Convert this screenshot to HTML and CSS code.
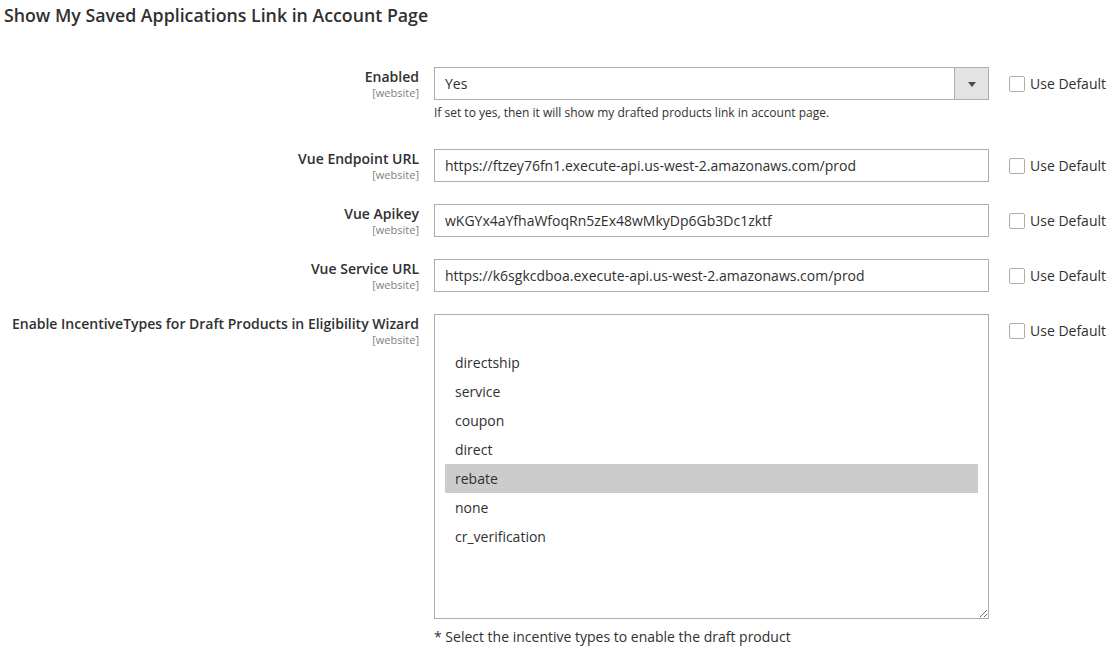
FILE: index.html
```html
<!DOCTYPE html>
<html lang="en">
<head>
<meta charset="utf-8">
<title>Config</title>
<link rel="stylesheet" href="styles.css">
</head>
<body>
<div class="page">
  <h2 class="section-title">Show My Saved Applications Link in Account Page</h2>

  <div class="fields">
    <div class="row">
      <div class="label"><span class="label-text">Enabled</span><span class="scope">[website]</span></div>
      <div class="control">
        <div class="select">
          <span class="select-value">Yes</span>
          <span class="select-btn"><span class="arrow"></span></span>
        </div>
        <p class="note small">If set to yes, then it will show my drafted products link in account page.</p>
      </div>
      <label class="use-default"><span class="checkbox"></span><span>Use Default</span></label>
    </div>

    <div class="row">
      <div class="label"><span class="label-text">Vue Endpoint URL</span><span class="scope">[website]</span></div>
      <div class="control">
        <div class="input">https://ftzey76fn1.execute-api.us-west-2.amazonaws.com/prod</div>
      </div>
      <label class="use-default"><span class="checkbox"></span><span>Use Default</span></label>
    </div>

    <div class="row">
      <div class="label"><span class="label-text">Vue Apikey</span><span class="scope">[website]</span></div>
      <div class="control">
        <div class="input">wKGYx4aYfhaWfoqRn5zEx48wMkyDp6Gb3Dc1zktf</div>
      </div>
      <label class="use-default"><span class="checkbox"></span><span>Use Default</span></label>
    </div>

    <div class="row">
      <div class="label"><span class="label-text">Vue Service URL</span><span class="scope">[website]</span></div>
      <div class="control">
        <div class="input">https://k6sgkcdboa.execute-api.us-west-2.amazonaws.com/prod</div>
      </div>
      <label class="use-default"><span class="checkbox"></span><span>Use Default</span></label>
    </div>

    <div class="row">
      <div class="label"><span class="label-text">Enable IncentiveTypes for Draft Products in Eligibility Wizard</span><span class="scope">[website]</span></div>
      <div class="control">
        <div class="multiselect">
          <div class="option"></div>
          <div class="option">directship</div>
          <div class="option">service</div>
          <div class="option">coupon</div>
          <div class="option">direct</div>
          <div class="option selected">rebate</div>
          <div class="option">none</div>
          <div class="option">cr_verification</div>
        </div>
        <p class="note large">* Select the incentive types to enable the draft product</p>
      </div>
      <label class="use-default"><span class="checkbox"></span><span>Use Default</span></label>
    </div>
  </div>
</div>
</body>
</html>
```

FILE: styles.css
```css
html, body {
  margin: 0;
  padding: 0;
  background: #ffffff;
}

body {
  font-family: "Open Sans", "DejaVu Sans", sans-serif;
  color: #303030;
  font-size: 14px;
}

.page {
  padding: 3px 0 0 4px;
}

.section-title {
  margin: 0;
  font-size: 17.75px;
  line-height: 24px;
  font-weight: 600;
  color: #303030;
}

.fields {
  margin-top: 40px;
  display: flex;
  flex-direction: column;
  gap: 22px;
}

.row {
  display: grid;
  grid-template-columns: 415px 555px 1fr;
  column-gap: 15px;
  align-items: start;
}

.label {
  display: flex;
  flex-direction: column;
  align-items: flex-end;
  text-align: right;
  padding-top: 2px;
}

.label-text {
  font-weight: 600;
  font-size: 14px;
  line-height: 16px;
  color: #303030;
}

.scope {
  font-size: 11px;
  line-height: 13px;
  color: #808080;
  margin-top: 1px;
}

.control {
  display: flex;
  flex-direction: column;
}

.input,
.select {
  box-sizing: border-box;
  height: 33px;
  border: 1px solid #adadad;
  background: #fff;
  padding: 0 10px;
  font-size: 14px;
  line-height: 31px;
  color: #303030;
  white-space: nowrap;
  overflow: hidden;
}

.select {
  display: flex;
  padding: 0 0 0 10px;
}

.select-value {
  flex: 1;
}

.select-btn {
  width: 33px;
  background: #e3e3e3;
  border-left: 1px solid #adadad;
  display: flex;
  align-items: center;
  justify-content: center;
}

.arrow {
  width: 0;
  height: 0;
  border-left: 4px solid transparent;
  border-right: 4px solid transparent;
  border-top: 5px solid #514943;
  margin-top: 1px;
}

.note {
  margin: 0;
  color: #303030;
}

.note.small {
  font-size: 12px;
  line-height: 17px;
  margin-top: 4px;
  padding-bottom: 6px;
}

.note.large {
  font-size: 14px;
  line-height: 19px;
  margin-top: 8px;
}

.multiselect {
  box-sizing: border-box;
  height: 305px;
  border: 1px solid #adadad;
  padding: 4px 10px;
  overflow: auto;
  resize: vertical;
  background: #fff;
}

.option {
  height: 29px;
  line-height: 29px;
  padding: 0 10px;
  font-size: 14px;
  color: #303030;
}

.option.selected {
  background: #cccccc;
}

.use-default {
  height: 33px;
  display: flex;
  align-items: center;
  gap: 5px;
  padding-left: 5px;
  font-size: 14px;
  color: #303030;
  white-space: nowrap;
}

.checkbox {
  box-sizing: border-box;
  width: 16px;
  height: 16px;
  border: 1px solid #adadad;
  border-radius: 2px;
  background: #fff;
}
```
